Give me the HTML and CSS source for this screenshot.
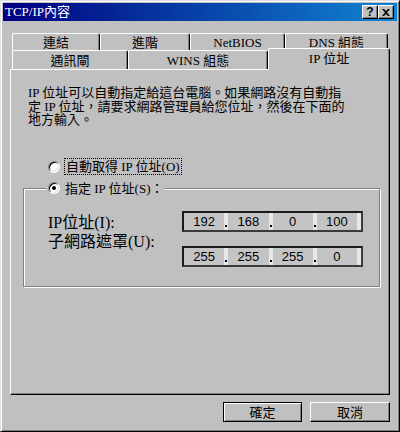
FILE: index.html
```html
<!DOCTYPE html>
<html lang="zh-Hant">
<head>
  <meta charset="UTF-8">
  <title>TCP/IP內容</title>
  <link rel="stylesheet" href="styles.css">
</head>
<body>
  <div class="window">
    <div class="titlebar">
      <span class="title">TCP/IP內容</span>
      <div class="title-btns">
        <span class="tbtn">?</span>
        <span class="tbtn">
          <svg width="8" height="7" viewBox="0 0 8 7"><path d="M0 0h2l2 2 2-2h2L5 3.5 8 7H6L4 5 2 7H0l3-3.5z" fill="#000"/></svg>
        </span>
      </div>
    </div>

    <div class="body">
      <div class="tabs">
        <div class="tab-row back">
          <div class="tab t-link">連結</div>
          <div class="tab t-adv">進階</div>
          <div class="tab t-bios">NetBIOS</div>
          <div class="tab t-dns">DNS 組態</div>
        </div>
        <div class="tab-row front">
          <div class="tab t-gw">通訊閘</div>
          <div class="tab t-wins">WINS 組態</div>
          <div class="tab t-ip active">IP 位址</div>
        </div>
      </div>

      <div class="panel">
        <p class="desc">IP 位址可以自動指定給這台電腦。如果網路沒有自動指<br>定 IP 位址，請要求網路管理員給您位址，然後在下面的<br>地方輸入。</p>

        <div class="radio-row">
          <span class="radio"></span>
          <span class="focus">自動取得 IP 位址(O)</span>
        </div>

        <div class="group">
          <div class="legend">
            <span class="radio checked"></span>
            <span>指定 IP 位址(S)：</span>
          </div>
          <div class="group-body">
            <div class="labels">
              <div>IP位址(I):</div>
              <div>子網路遮罩(U):</div>
            </div>
            <div class="fields">
              <div class="ipbox">
                <span class="cell">192<i class="dot"></i></span>
                <span class="cell">168<i class="dot"></i></span>
                <span class="cell">0<i class="dot"></i></span>
                <span class="cell">100<i></i></span>
              </div>
              <div class="ipbox">
                <span class="cell">255<i class="dot"></i></span>
                <span class="cell">255<i class="dot"></i></span>
                <span class="cell">255<i class="dot"></i></span>
                <span class="cell">0<i></i></span>
              </div>
            </div>
          </div>
        </div>
      </div>

      <div class="actions">
        <button class="btn default">確定</button>
        <button class="btn">取消</button>
      </div>
    </div>
  </div>
</body>
</html>
```

FILE: styles.css
```css
* {
  box-sizing: border-box;
}

body {
  margin: 0;
  background: #c0c0c0;
  font-family: "Liberation Serif", "Noto Sans CJK TC", serif;
  font-size: 13px;
  color: #000;
}

.window {
  width: 400px;
  height: 432px;
  background: #c0c0c0;
  border: 1px solid;
  border-color: #dfdfdf #000 #000 #dfdfdf;
  box-shadow: inset 1px 1px #fff, inset -1px -1px #808080;
  padding: 2px;
  display: flex;
  flex-direction: column;
}

.titlebar {
  height: 18px;
  background: linear-gradient(to right, #000080, #1084d0);
  display: flex;
  align-items: center;
  justify-content: space-between;
  padding: 0 3px 0 2px;
  color: #fff;
}

.title {
  font-size: 13px;
  line-height: 18px;
}

.title-btns {
  display: flex;
}

.tbtn {
  width: 16px;
  height: 14px;
  background: #c0c0c0;
  border: 1px solid;
  border-color: #fff #000 #000 #fff;
  box-shadow: inset -1px -1px #808080;
  display: flex;
  align-items: center;
  justify-content: center;
  color: #000;
  font: bold 12px "Liberation Sans", sans-serif;
}

.body {
  flex: 1;
  padding: 12px 7px 0;
  display: flex;
  flex-direction: column;
}

.tabs {
  padding-left: 2px;
}

.tab-row {
  display: flex;
  height: 17px;
}

.tab-row.front {
  height: 19px;
  align-items: flex-end;
}

.tab {
  height: 100%;
  background: #c0c0c0;
  border-top: 1px solid #fff;
  border-left: 1px solid #fff;
  border-right: 1px solid #000;
  border-radius: 2px 3px 0 0;
  box-shadow: inset -1px 0 #808080;
  display: flex;
  align-items: center;
  justify-content: center;
  line-height: 1;
}

.t-link { width: 88px; }
.t-adv { width: 90px; }
.t-bios { width: 95px; }
.t-dns { width: 103px; }
.t-gw { width: 116px; }
.t-wins { width: 140px; }

.tab.active {
  width: 122px;
  height: 22px;
  margin-bottom: -1px;
  padding-bottom: 3px;
  position: relative;
  z-index: 1;
}

.panel {
  height: 326px;
  border: 1px solid;
  border-color: #fff #000 #000 #fff;
  box-shadow: inset -1px -1px #808080;
  padding: 16px 9px 0 12px;
}

.desc {
  margin: 0 0 0 5px;
  line-height: 13.5px;
}

.radio-row {
  display: flex;
  align-items: center;
  gap: 5px;
  height: 18px;
  margin-top: 31px;
  padding-left: 25px;
}

.radio {
  width: 12px;
  height: 12px;
  border-radius: 50%;
  background: #fff;
  border: 1px solid;
  border-color: #808080 #fff #fff #808080;
  box-shadow: inset 1px 1px #000, inset -1px -1px #dfdfdf;
  display: flex;
  align-items: center;
  justify-content: center;
}

.radio.checked::after {
  content: "";
  width: 4px;
  height: 4px;
  border-radius: 50%;
  background: #000;
}

.focus {
  outline: 1px dotted #000;
  padding: 0 1px;
  line-height: 15px;
}

.group {
  margin-top: 12px;
  border: 1px solid #808080;
  box-shadow: inset 1px 1px #fff, 1px 1px #fff;
  padding: 0 15px 19px 24px;
}

.legend {
  display: flex;
  align-items: center;
  gap: 5px;
  width: fit-content;
  height: 18px;
  margin: -10px 0 0 -2px;
  padding: 0 2px;
  background: #c0c0c0;
}

.group-body {
  display: flex;
  margin-top: 14px;
}

.labels {
  width: 134px;
  padding-top: 2px;
  font-size: 16px;
  line-height: 19px;
}

.fields {
  display: flex;
  flex-direction: column;
  gap: 14px;
}

.ipbox {
  width: 181px;
  height: 21px;
  display: flex;
  border: 2px solid;
  border-color: #1a1a1a #3a3a3a #3a3a3a #1a1a1a;
  background: #c4c4c4;
  font-family: "Liberation Sans", sans-serif;
  font-size: 13px;
}

.cell {
  flex: 1;
  display: flex;
  align-items: center;
  justify-content: center;
  position: relative;
  padding-right: 4px;
}

.cell i {
  position: absolute;
  right: 0;
  top: 0;
  bottom: 0;
  width: 4px;
  background: #e8e8e8;
}

.cell i.dot::after {
  content: "";
  position: absolute;
  left: 1px;
  bottom: 3px;
  width: 2px;
  height: 2px;
  background: #000;
}

.actions {
  display: flex;
  justify-content: flex-end;
  gap: 8px;
  margin-top: 7px;
}

.btn {
  width: 80px;
  height: 20px;
  padding: 0;
  background: #c0c0c0;
  border: 1px solid;
  border-color: #fff #000 #000 #fff;
  box-shadow: inset -1px -1px #808080;
  font-family: "Liberation Serif", "Noto Sans CJK TC", serif;
  font-size: 13px;
  line-height: 1;
  color: #000;
}

.btn.default {
  width: 79px;
  border: 1px solid #000;
  box-shadow: inset 1px 1px #fff, inset -1px -1px #808080;
}
```
